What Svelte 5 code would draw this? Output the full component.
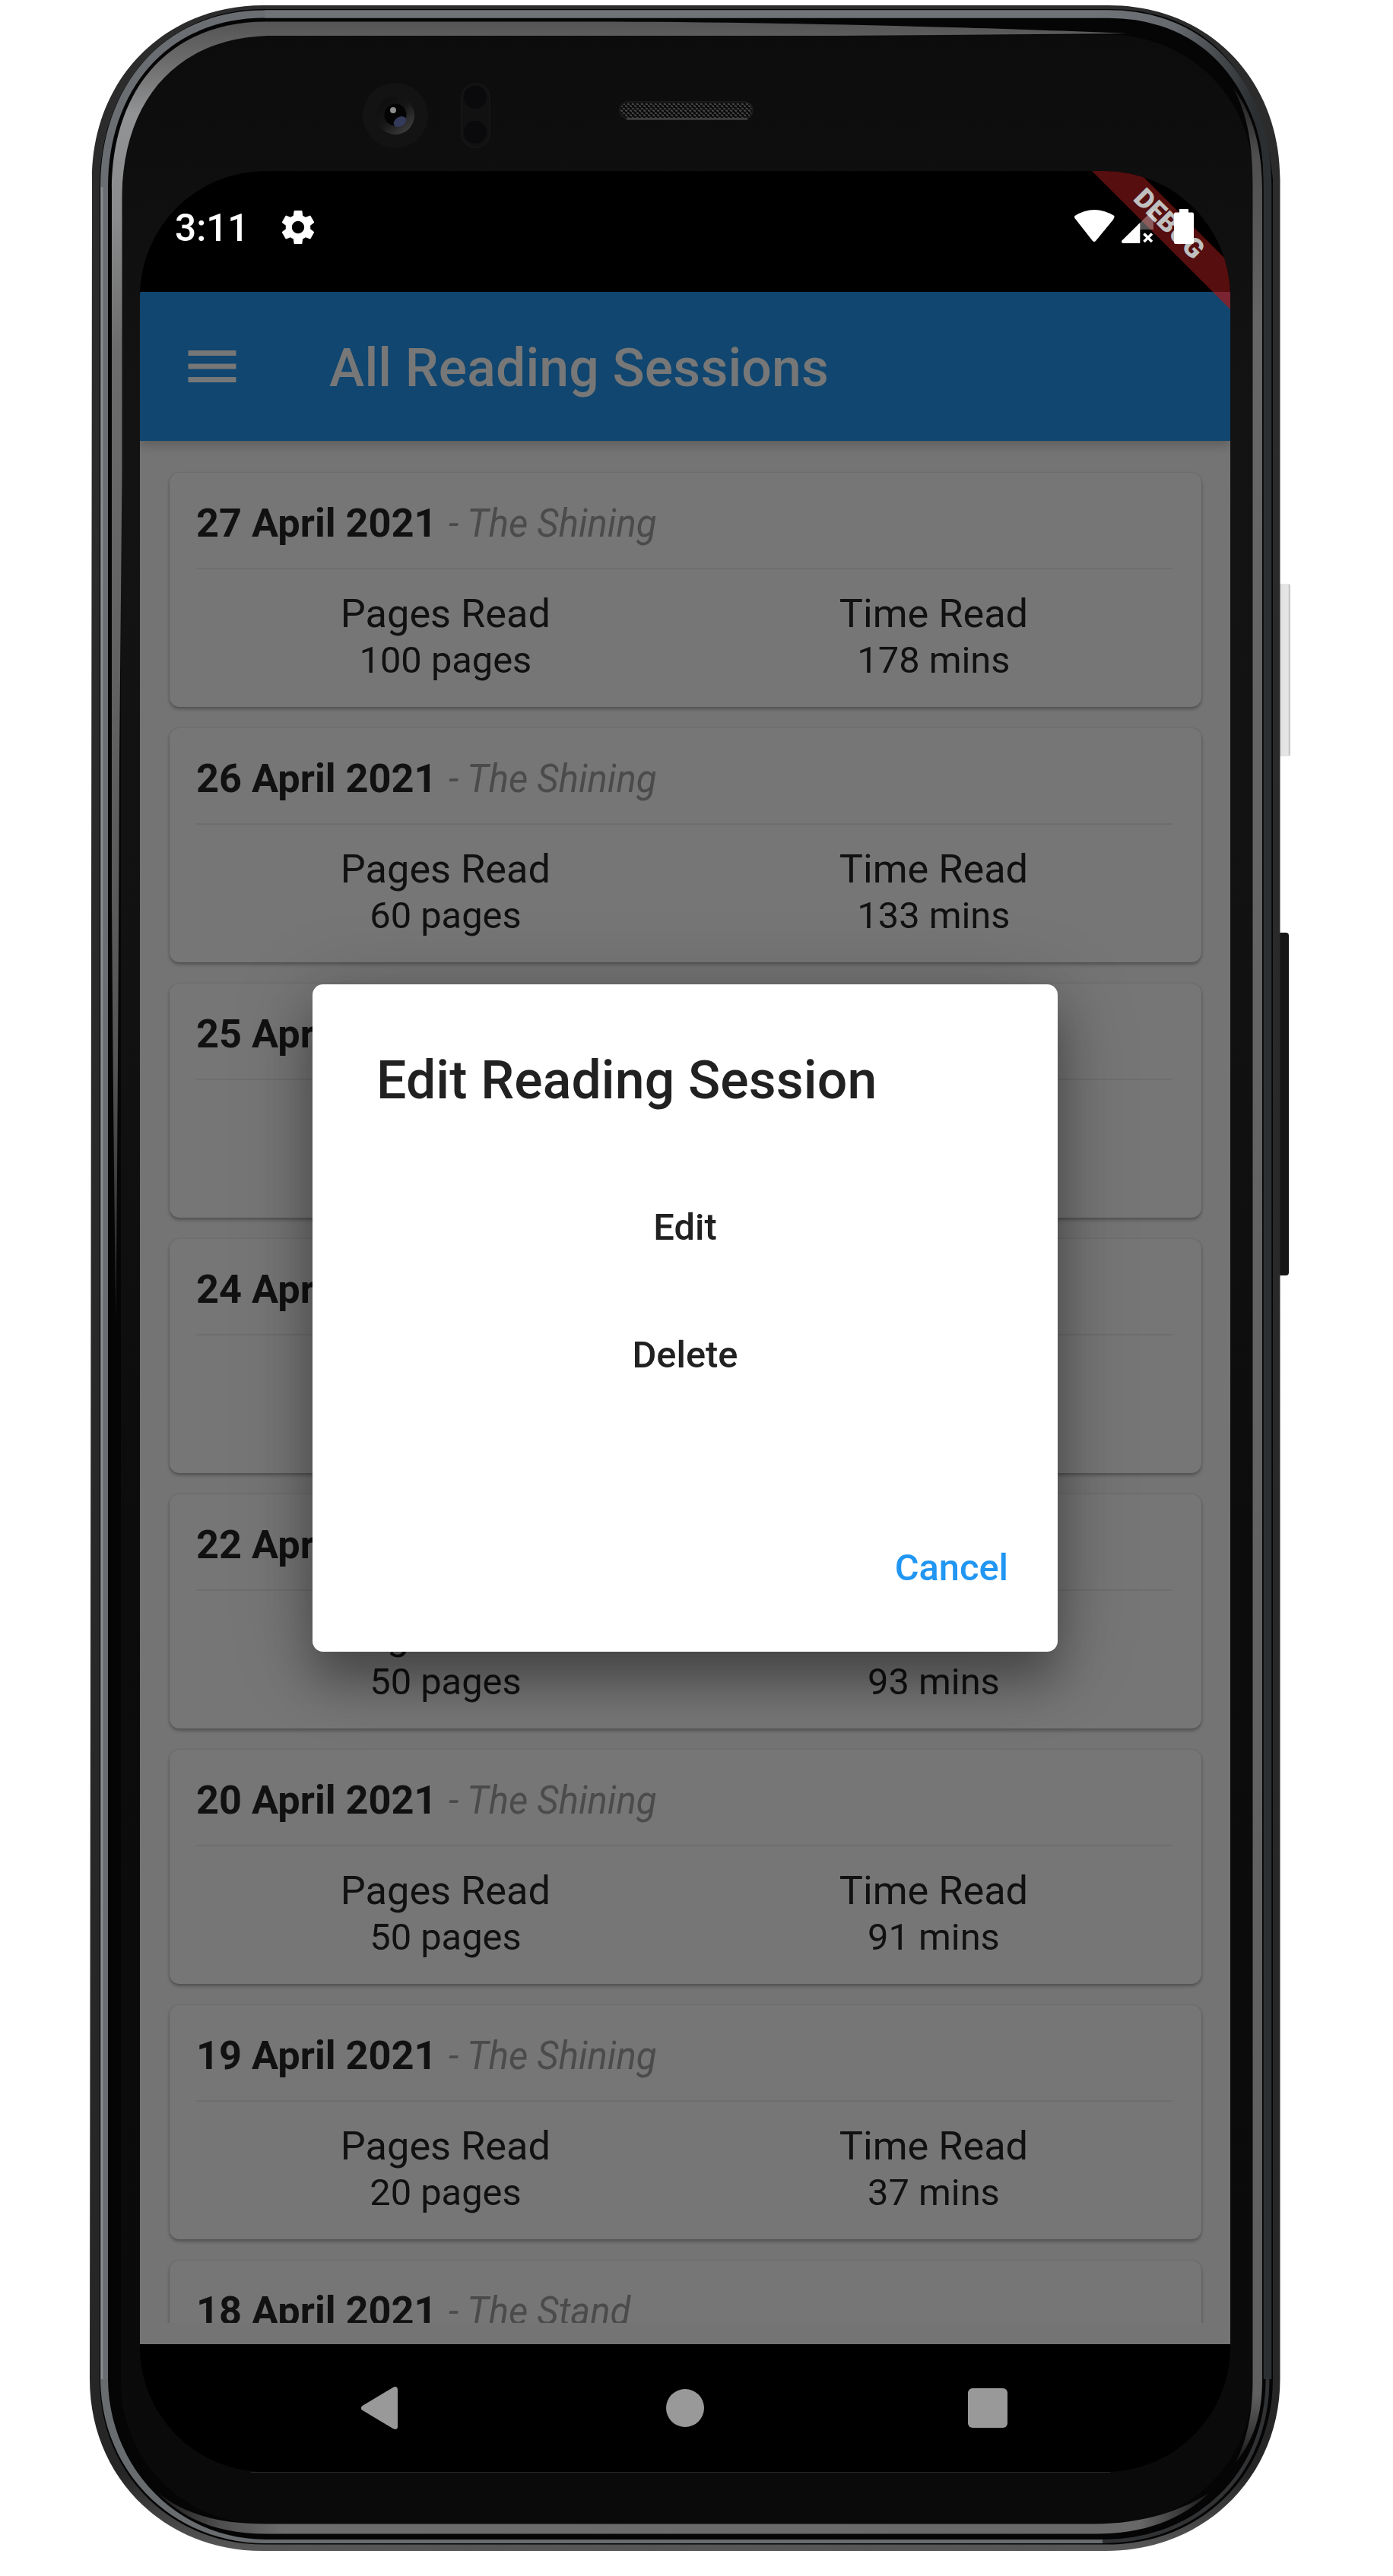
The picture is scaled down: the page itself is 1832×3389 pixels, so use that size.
<script>
  const sessions = [
    ['27 April 2021', 'The Shining', '100 pages', '178 mins'],
    ['26 April 2021', 'The Shining', '60 pages', '133 mins'],
    ['25 April 2021', 'The Shining', '50 pages', '93 mins'],
    ['24 April 2021', 'The Shining', '50 pages', '93 mins'],
    ['22 April 2021', 'The Shining', '50 pages', '93 mins'],
    ['20 April 2021', 'The Shining', '50 pages', '91 mins'],
    ['19 April 2021', 'The Shining', '20 pages', '37 mins'],
    ['18 April 2021', 'The Stand', '20 pages', '37 mins']
  ];
</script>

<main class="stage">
  <svg class="frame" viewBox="0 0 1832 3389" aria-hidden="true">
    <defs>
      <linearGradient id="shell" x1="0" y1="0" x2="0" y2="1">
        <stop offset="0" stop-color="#2c2c2c" />
        <stop offset="0.97" stop-color="#262626" />
        <stop offset="1" stop-color="#585858" />
      </linearGradient>
      <linearGradient id="silver" gradientUnits="userSpaceOnUse" x1="1440" y1="0" x2="1650" y2="0">
        <stop offset="0" stop-color="#707478" />
        <stop offset="0.5" stop-color="#666a6e" />
        <stop offset="1" stop-color="#2c2f32" />
      </linearGradient>
      <linearGradient id="leftRim" gradientUnits="userSpaceOnUse" x1="0" y1="30" x2="0" y2="1740">
        <stop offset="0" stop-color="#555" />
        <stop offset="0.03" stop-color="#6c6c6c" />
        <stop offset="0.07" stop-color="#929395" />
        <stop offset="0.15" stop-color="#8a8b8c" />
        <stop offset="0.25" stop-color="#6c6c6c" />
        <stop offset="0.8" stop-color="#555" />
        <stop offset="1" stop-color="#222" />
      </linearGradient>
      <linearGradient id="rightRim" gradientUnits="userSpaceOnUse" x1="0" y1="110" x2="0" y2="3245">
        <stop offset="0" stop-color="#1a1a1a" />
        <stop offset="0.03" stop-color="#4e4e4e" />
        <stop offset="0.1" stop-color="#666" />
        <stop offset="0.97" stop-color="#606060" />
        <stop offset="1" stop-color="#151515" />
      </linearGradient>
      <linearGradient id="bottomRim" gradientUnits="userSpaceOnUse" x1="206" y1="0" x2="1595" y2="0">
        <stop offset="0" stop-color="#1a1a1a" />
        <stop offset="0.06" stop-color="#4e4e4e" />
        <stop offset="0.12" stop-color="#6c6c6c" />
        <stop offset="0.93" stop-color="#686868" />
        <stop offset="1" stop-color="#151515" />
      </linearGradient>
      <linearGradient id="bezel" x1="0" y1="0" x2="0" y2="1">
        <stop offset="0" stop-color="#0c0c0c" />
        <stop offset="0.15" stop-color="#131313" />
        <stop offset="0.4" stop-color="#111" />
        <stop offset="0.6" stop-color="#0c0c0c" />
        <stop offset="1" stop-color="#0a0a0a" />
      </linearGradient>
      <linearGradient id="button" x1="0" x2="1">
        <stop offset="0" stop-color="#bdbdbd" />
        <stop offset="0.3" stop-color="#e2e2e2" />
        <stop offset="0.8" stop-color="#e6e6e6" />
        <stop offset="1" stop-color="#bbb" />
      </linearGradient>
      <linearGradient id="lens" x1="0.1" y1="0.1" x2="0.8" y2="0.9">
        <stop offset="0" stop-color="#0d0d0e" />
        <stop offset="0.5" stop-color="#161617" />
        <stop offset="1" stop-color="#3a3a3b" />
      </linearGradient>
      <pattern id="mesh" width="6" height="6" patternUnits="userSpaceOnUse">
        <rect width="6" height="6" fill="#0c0c0c" />
        <path d="M0 1L3 2.500M3 4.500L6 5.500" stroke="#464646" stroke-width="2" />
      </pattern>
    </defs>
    <rect x="1680" y="768" width="17" height="227" rx="3" fill="url(#button)" />
    <rect x="1680" y="1227" width="15" height="451" rx="4" fill="#161616" />
    <path d="M346 7H1458C1590 7 1683.500 105 1683.500 236V3130C1683.500 3258 1585 3356 1455 3356H345C215 3356 118 3258 118 3130L121 236C121 105 215 7 346 7Z" fill="url(#shell)" />
    <path d="M348 12H1458C1590 12 1660 100 1674 236V3130C1674 3250 1585 3347.500 1455 3347.500H348C222 3347.500 131 3252 131 3130V246C131 113 218 12 348 12Z" fill="#050505" />
    <path d="M348 18.500H1458C1590 18.500 1667 118 1667 246V3130" fill="none" stroke="url(#silver)" stroke-width="10.500" />
    <path d="M348 18.500C216 18.500 137 118 137 246V3130" fill="none" stroke="#6a6e72" stroke-width="10" />
    <path d="M134 246V3130" fill="none" stroke="#8a8c8f" stroke-width="2.500" />
    <path d="M132 3130H142C143 3245 232 3341 350 3341H1450V3346H350C225 3346 133 3250 132 3130Z" fill="#686c6f" />
    <path d="M1450 3343.500C1575 3343.500 1667 3255 1667 3130" fill="none" stroke="#303234" stroke-width="5" />
    <rect x="146" y="27" width="1515" height="3311" rx="200" fill="#050505" />
    <rect x="159" y="46" width="1489" height="3275" rx="188" fill="url(#bezel)" />
    <path d="M1482 44C1300 36 1000 28.500 780 28.500H350C220 28.500 147 120 147 250V1180Q149 1500 152.500 1740Q156 1300 157 1000L160.500 620V260C161 130 235 47 360 47H1100Z" fill="url(#leftRim)" />
    <path d="M1622 116C1641 152 1647.500 190 1647.500 246V3130C1647.500 3175 1640 3210 1625 3240C1648 3210 1660 3180 1660 3130V250C1660 195 1648 150 1622 116Z" fill="url(#rightRim)" />
    <path d="M208 3280C250 3313 300 3320.500 350 3320.500H1440C1500 3320.500 1550 3305 1590 3280C1550 3318 1500 3333.500 1440 3333.500H350C290 3333.500 245 3317 208 3280Z" fill="url(#bottomRim)" />
    <circle cx="520" cy="152" r="43" fill="#131314" />
    <circle cx="520" cy="152" r="25" fill="url(#lens)" />
    <circle cx="520" cy="151" r="14.500" fill="#040405" />
    <circle cx="517" cy="145" r="4" fill="#8e8e8e" />
    <ellipse cx="526" cy="160" rx="9" ry="6" transform="rotate(-30 526 160)" fill="#333a5a" />
    <rect x="607" y="110" width="37" height="84" rx="18.500" fill="#111112" stroke="#151516" stroke-width="2" />
    <circle cx="625" cy="128" r="15" fill="#0a0a0c" />
    <circle cx="625" cy="174" r="15" fill="#0a0a0c" />
    <rect x="815" y="134" width="175" height="22" rx="11" fill="url(#mesh)" stroke="#1a1a1a" stroke-width="2" />
    <path d="M824 156.500H983" stroke="#4f4f4f" stroke-width="2" />
    <path d="M330 3252.500H1460" stroke="#2c2c2c" stroke-width="1" />
  </svg>

  <section class="screen">
    <div class="status">
      <span>3:11</span>
      <svg class="gear" viewBox="2.250 2 19.500 20" preserveAspectRatio="none">
        <path fill="#fff" d="M19.140 12.940c.04-.3.060-.61.060-.94 0-.32-.02-.64-.07-.94l2.030-1.580c.18-.14.230-.41.120-.61l-1.920-3.320c-.12-.22-.37-.29-.59-.22l-2.390.960c-.5-.38-1.030-.7-1.620-.94l-.36-2.540c-.04-.24-.24-.41-.48-.41h-3.840c-.24 0-.43.170-.47.410l-.36 2.540c-.59.240-1.130.570-1.620.940l-2.390-.96c-.22-.08-.47 0-.59.220L2.740 8.870c-.12.210-.08.470.120.610l2.030 1.580c-.05.300-.09.630-.09.940s.02.640.070.940l-2.030 1.580c-.18.140-.23.410-.12.610l1.920 3.320c.12.220.37.290.59.220l2.390-.96c.5.380 1.030.700 1.620.940l.36 2.540c.05.240.24.410.48.410h3.840c.24 0 .44-.17.470-.41l.36-2.540c.59-.24 1.130-.56 1.620-.94l2.390.960c.22.080.47 0 .59-.22l1.920-3.320c.12-.22.070-.47-.12-.61l-2.010-1.580zM12 15.600c-1.980 0-3.600-1.620-3.600-3.600s1.620-3.600 3.600-3.600 3.600 1.620 3.600 3.600-1.620 3.600-3.600 3.600z" />
      </svg>
    </div>
    <header class="appbar">
      <svg class="menu" viewBox="0 0 18 12"><path fill="#777" d="M0 0h18v2H0zM0 5h18v2H0zM0 10h18v2H0z" /></svg>
      <h1>All Reading Sessions</h1>
    </header>
    <div class="body">
      <div class="list">
        {#each sessions as [date, book, pages, time]}
          <article class="card">
            <div class="heading"><b>{date}</b><i>- {book}</i></div>
            <div class="stats">
              <div class="stat"><span class="label">Pages Read</span><span class="value">{pages}</span></div>
              <div class="stat"><span class="label">Time Read</span><span class="value">{time}</span></div>
            </div>
          </article>
        {/each}
      </div>
    </div>
    <nav class="nav">
      <svg viewBox="0 0 56 56"><path class="back" d="M44.500 3.500V52.500L3.500 28Z" /></svg>
      <svg viewBox="0 0 56 56"><circle cx="28" cy="28" r="25" /></svg>
      <svg viewBox="0 0 56 56"><rect x="2" y="2" width="52" height="52" rx="6" /></svg>
    </nav>

    <svg class="ribbon" viewBox="1408 225 210 200">
      <path d="M1436 225H1496L1618 347V384H1595Z" fill="#560e0f" />
      <path d="M1595 384H1618V407Z" fill="#7b2432" />
      <text transform="translate(1538 294) rotate(45)" y="12.500" text-anchor="middle">DEBUG</text>
      <path d="M1413.500 284Q1439 268 1465.500 284Q1466 286 1464 289L1441 317Q1439 319 1437 317L1415 289Q1412 286 1413.500 284Z" fill="#fff" />
      <path d="M1499 293.500L1517 275.500V302H1499Z" fill="#fff" opacity=".32" />
      <path d="M1499.300 293V320H1477Q1474 319 1475.500 316.500Z" fill="#fff" />
      <path d="M1504.500 307.500L1515 318M1515 307.500L1504.500 318" stroke="#fff" stroke-width="3.500" />
      <path d="M1551 275H1563V279.600H1568Q1570 279.600 1570 282V318.500Q1570 321 1567.500 321H1546.500Q1544 321 1544 318.500V282Q1544 279.600 1546 279.600H1551Z" fill="#fff" />
    </svg>

    <div class="dialog">
      <h2>Edit Reading Session</h2>
      <button>Edit</button>
      <button>Delete</button>
      <button class="cancel">Cancel</button>
    </div>
  </section>
</main>

<style>
  :global(body) { margin: 0; background: #fff; }
  .stage { position: relative; width: 1832px; height: 3389px; box-sizing: border-box; padding: 225px 214px 0 184px; overflow: hidden; font-family: Roboto, sans-serif; background: #fff; }
  .frame { position: absolute; left: 0; top: 0; width: 1832px; height: 3389px; }
  .screen { position: relative; display: flex; flex-direction: column; width: 1434px; height: 3027px; border-radius: 165px; overflow: hidden; background: #000; }
  .status { display: flex; align-items: center; height: 159px; padding: 0 0 12px 46px; box-sizing: border-box; gap: 43px; color: #fff; font-size: 49.500px; font-weight: 500; }
  .status span { padding-top: 3px; }
  .gear { width: 44px; height: 46px; }
  .appbar { position: relative; z-index: 1; display: flex; align-items: center; height: 196px; padding-left: 63px; background: #10466f; box-shadow: 0 4px 14px rgba(0,0,0,.24); }
  .menu { width: 64px; height: 42px; }
  h1 { margin: 0 0 0 122px; padding-top: 3px; color: #777; font-size: 69.700px; font-weight: 500; letter-spacing: .17px; line-height: 80px; }
  .body { height: 2504px; box-sizing: border-box; padding-bottom: 28px; background: #747474; }
  .list { height: 2476px; box-sizing: border-box; padding: 42px 38px 0 39px; overflow: hidden; }
  .card { box-sizing: border-box; height: 308px; margin-bottom: 28px; padding: 0 38px 0 35px; border-radius: 13px; background: #767676; box-shadow: 0 3px 4px rgba(0,0,0,.28), 0 0 3px rgba(0,0,0,.12); }
  .heading { display: flex; align-items: center; height: 127px; padding-top: 6px; box-sizing: border-box; border-bottom: 2px solid #6e6e6e; font-size: 52.300px; gap: 15px; color: #111; }
  .heading b { font-weight: 700; }
  .heading i { color: #4b4b4b; transform: scaleX(.94); transform-origin: left; }
  .stats { display: flex; justify-content: space-around; padding-top: 28px; color: #111; }
  .stat { display: flex; flex-direction: column; align-items: center; }
  .label { font-size: 52.300px; line-height: 61px; }
  .value { font-size: 48.800px; line-height: 61px; }
  .nav { display: flex; flex: 1; align-items: center; justify-content: center; gap: 342px; background: #000; }
  .nav svg { width: 56px; height: 56px; fill: #999; }
  .back { stroke: #999; stroke-width: 7px; stroke-linejoin: round; }
  .ribbon { position: absolute; z-index: 2; right: 0; top: 0; width: 210px; height: 200px; }
  .ribbon text { font-size: 35.500px; font-weight: 900; fill: #c0c0c0; }
  .dialog { position: absolute; z-index: 2; left: 227px; top: 1070px; display: flex; flex-direction: column; width: 980px; height: 878px; box-sizing: border-box; border-radius: 14px; background: #fff; box-shadow: 0 38px 60px rgba(0,0,0,.3), 0 15px 110px rgba(0,0,0,.22); padding: 85px 84px 0; }
  h2 { margin: 0 0 69px; color: #212121; font-size: 69.700px; font-weight: 500; letter-spacing: .17px; line-height: 82px; }
  button { height: 168px; padding: 0; border: 0; background: none; color: #212121; font: 500 48.800px/168px Roboto, sans-serif; }
  .cancel { margin-top: 112px; align-self: flex-end; margin-right: -19px; color: #2196f3; }
</style>
